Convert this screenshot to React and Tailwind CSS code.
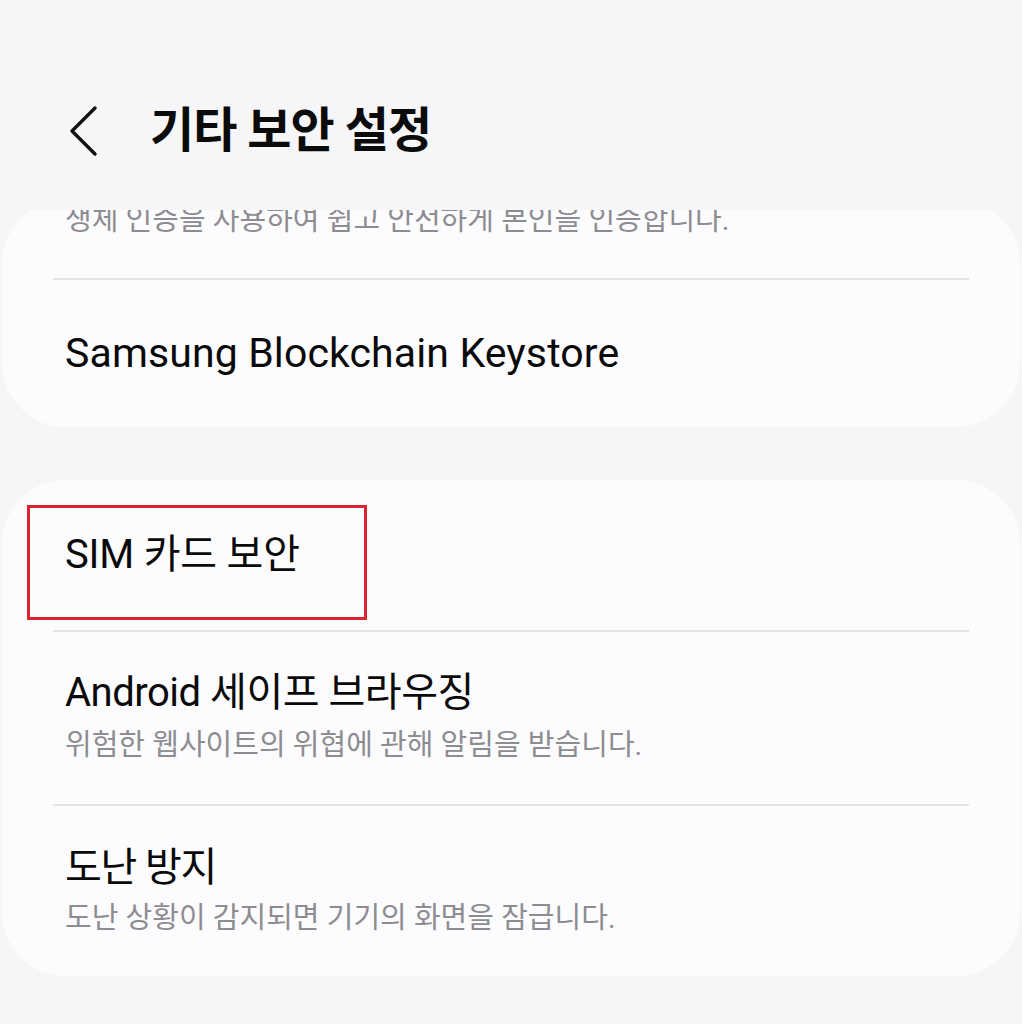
import React from 'react'

const font = { fontFamily: 'Roboto, "Noto Sans CJK KR", sans-serif' }

const Divider = () => <div className="mx-[51px] h-[2px] bg-[#e3e3e5]" />

const Row = ({ title, sub, pt, gap, pb, track }) => (
  <div className={`pl-[63px] ${pt} ${pb}`}>
    <div className={`text-[40px] leading-[48px] text-[#0a0a0a] ${track}`}>{title}</div>
    {sub && <div className={`${gap} text-[29px] leading-[40px] text-[#8d8d91] tracking-[0em]`}>{sub}</div>}
  </div>
)

export default function App() {
  return (
    <div className="h-[1024px] w-[1022px] overflow-hidden bg-[#f6f6f8]" style={font}>
      {/* Header */}
      <div className="h-[210px] pt-[54px] pb-[3px] flex items-center pl-[68px]">
        <svg width="30" height="52" viewBox="0 0 30 52" fill="none">
          <path d="M27 3 L4 26 L27 49" stroke="#111" strokeWidth="3.4" strokeLinecap="round" strokeLinejoin="round" />
        </svg>
        <h1 className="ml-[52px] text-[48px] font-bold text-[#0b0b0b] tracking-[-0.02em]">기타 보안 설정</h1>
      </div>

      {/* Scroll area */}
      <div className="h-[814px] overflow-hidden">
        <div className="mx-[2px] mt-[4px] rounded-[64px] bg-[#fcfcfe]">
          <div className="-mt-[14px] pl-[63px] text-[29px] leading-[40px] text-[#8d8d91] tracking-[0em]">
            생체 인증을 사용하여 쉽고 안전하게 본인을 인증합니다.
          </div>
          <div className="h-[38px]" />
          <Divider />
          <div className="h-[147px] flex items-center pl-[63px] text-[41px] text-[#0a0a0a] tracking-[0.003em]">
            Samsung Blockchain Keystore
          </div>
        </div>

        <div className="relative mx-[2px] mt-[53px] rounded-[64px] bg-[#fcfcfe]">
          <div className="h-[150px] flex items-center pl-[63px] text-[40px] text-[#0a0a0a] tracking-[-0.005em]">
            SIM 카드 보안
          </div>
          <div className="absolute left-[25px] top-[25px] w-[340px] h-[115px] border-[3px] border-[#d8252f]" />
          <Divider />
          <Row title="Android 세이프 브라우징" sub="위험한 웹사이트의 위협에 관해 알림을 받습니다." pt="pt-[37px]" gap="mt-[8px]" pb="pb-[39px]" track="tracking-[-0.012em]" />
          <Divider />
          <Row title="도난 방지" sub="도난 상황이 감지되면 기기의 화면을 잠급니다." pt="pt-[38px]" gap="mt-[6px]" pb="pb-[38px]" track="tracking-[-0.03em]" />
        </div>
      </div>
    </div>
  )
}
